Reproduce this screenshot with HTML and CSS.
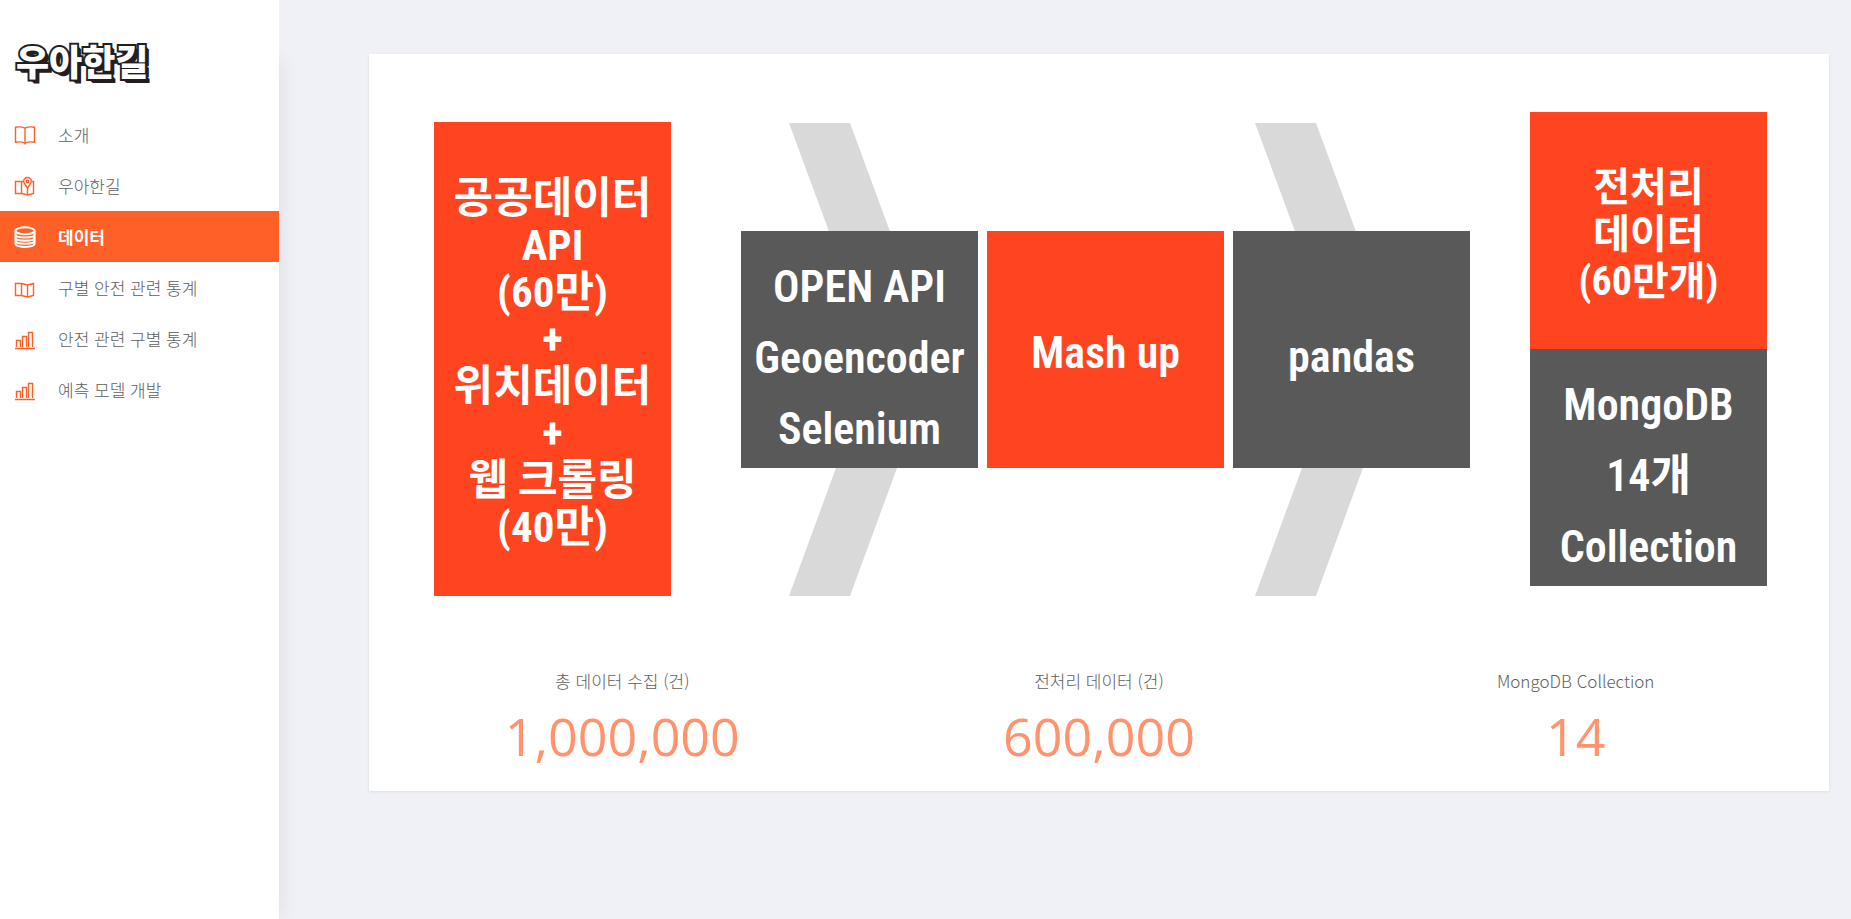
FILE: index.html
```html
<!DOCTYPE html>
<html lang="ko">
<head>
<meta charset="utf-8">
<meta name="viewport" content="width=device-width, initial-scale=1">
<title>우아한길</title>
<link rel="stylesheet" href="styles.css">
</head>
<body>
<div class="layout">
  <aside class="sidebar">
    <a class="logo" href="#">우아한길</a>
    <nav>
      <ul class="menu">
        <li><a class="menu-link" href="#">
          <svg class="icon" viewBox="0 0 22 22" aria-hidden="true"><path d="M11 4.2C8 2.7 4.500 2.700 1.500 3.200V18.200C4.500 17.700 8 17.700 11 19.200C14 17.700 17.500 17.700 20.500 18.200V3.200C17.500 2.700 14 2.700 11 4.200ZM11 4.200V20.500"/></svg>
          <span>소개</span></a></li>
        <li><a class="menu-link" href="#">
          <svg class="icon" viewBox="0 0 22 22" aria-hidden="true"><path d="M9.500 6.500H1.500V18.500H8L13.500 20L19.500 18.500V6.500H17.500M7.500 6.500V18.500M13.500 14V20M13.500 13.500C12.500 10.500 9.700 9.200 9.700 6.300A3.800 3.800 0 0 1 17.300 6.300C17.300 9.200 14.500 10.500 13.500 13.500Z"/><circle cx="13.500" cy="6.400" r="1.200"/></svg>
          <span>우아한길</span></a></li>
        <li><a class="menu-link active" href="#" aria-current="page">
          <svg class="icon database" viewBox="0 0 22 22" aria-hidden="true"><ellipse cx="11" cy="4.800" rx="9.600" ry="3.500"/><path d="M1.400 4.800V17.500C1.400 22 20.600 22 20.600 17.500V4.800M1.400 8.200C1.400 12.500 20.600 12.500 20.600 8.200M1.400 11.400C1.400 15.700 20.600 15.700 20.600 11.400M1.400 14.600C1.400 18.900 20.600 18.900 20.600 14.600"/></svg>
          <span>데이터</span></a></li>
        <li><a class="menu-link" href="#">
          <svg class="icon" viewBox="0 0 22 22" aria-hidden="true"><path d="M1.500 6.500H7.500L13.500 8L19.500 6.500V18.500L13.500 20L7.500 18.500H1.500ZM7.500 6.500V18.500M13.500 8V20"/></svg>
          <span>구별 안전 관련 통계</span></a></li>
        <li><a class="menu-link" href="#">
          <svg class="icon" viewBox="0 0 22 22" aria-hidden="true"><path d="M1 20.500H21M2.500 19V12.500H6.500V19M8.500 19V8.500H12.500V19M14.500 19V4.500H18.500V19"/></svg>
          <span>안전 관련 구별 통계</span></a></li>
        <li><a class="menu-link" href="#">
          <svg class="icon" viewBox="0 0 22 22" aria-hidden="true"><path d="M1 20.500H21M2.500 19V12.500H6.500V19M8.500 19V8.500H12.500V19M14.500 19V4.500H18.500V19"/></svg>
          <span>예측 모델 개발</span></a></li>
      </ul>
    </nav>
  </aside>
  <main class="main">
    <section class="card">
      <div class="diagram">
        <svg class="arrows" viewBox="0 0 1333 484" preserveAspectRatio="none" aria-hidden="true"><path d="M355 11H416L503 247L416 484H355L442 247ZM821 11H882L969 247L882 484H821L908 247Z"/></svg>
        <div class="block source">공공데이터<br>API<br>(60만)<br>+<br>위치데이터<br>+<br>웹 크롤링<br>(40만)</div>
        <div class="steps">
          <div class="block gray spaced">OPEN API<br>Geoencoder<br>Selenium</div>
          <div class="block latin">Mash up</div>
          <div class="block gray latin pandas">pandas</div>
        </div>
        <div class="results">
          <div class="block total">전처리<br>데이터<br>(60만개)</div>
          <div class="block gray spaced">MongoDB<br>14개<br>Collection</div>
        </div>
      </div>
      <dl class="stats">
        <div class="stat"><dt>총 데이터 수집 (건)</dt><dd>1,000,000</dd></div>
        <div class="stat"><dt>전처리 데이터 (건)</dt><dd>600,000</dd></div>
        <div class="stat"><dt>MongoDB Collection</dt><dd>14</dd></div>
      </dl>
    </section>
  </main>
</div>
</body>
</html>
```
FILE: styles.css
```css
* { box-sizing: border-box; }

body {
  margin: 0;
  background: #eff1f7;
  color: #606060;
  font-family: "Noto Sans CJK KR", sans-serif;
  font-size: 17px;
  font-weight: 300;
}

.layout {
  display: grid;
  grid-template-columns: 279px minmax(0, 1fr);
  min-height: 100vh;
}

.sidebar {
  position: relative;
  padding-top: 27px;
  background: #fff;
}

.sidebar::before {
  content: "";
  position: absolute;
  inset: 60px 0 0;
  z-index: -1;
  box-shadow: 1px 0 20px rgba(0, 0, 0, 0.08);
}

.logo {
  display: block;
  height: 82px;
  padding-left: 16px;
  color: #fff;
  font-size: 36px;
  font-weight: 900;
  line-height: 66px;
  text-decoration: none;
  -webkit-text-stroke: 4px #231f20;
  paint-order: stroke fill;
  text-shadow: 1px 1px 0 #231f20, 2px 2px 0 #231f20, 3px 3px 0 #231f20, 4px 4px 0 #231f20;
}

.menu {
  margin: 0;
  padding: 0;
  list-style: none;
}

.menu-link {
  display: flex;
  align-items: center;
  gap: 22px;
  height: 51px;
  padding-left: 14px;
  color: #606060;
  text-decoration: none;
}

.menu-link.active {
  background: #ff6028;
  color: #fff;
  font-weight: 700;
}

.icon {
  width: 22px;
  height: 22px;
  fill: none;
  stroke: #ff6028;
  stroke-width: 1.4;
}

.icon.database {
  stroke: #fff;
  stroke-width: 2;
}

.main { padding: 54px 22px 54px 90px; }

.card {
  padding: 58px 0 13px;
  background: #fff;
  box-shadow: 0 1px 3px rgba(0, 0, 0, 0.08);
}

.diagram {
  position: relative;
  display: grid;
  grid-template-columns: 237fr 70fr 729fr 60fr 237fr;
  margin: 0 62px 0 65px;
}

.arrows {
  position: absolute;
  inset: 0;
  width: 100%;
  height: 100%;
  fill: #d9d9d9;
}

.block {
  position: relative;
  display: flex;
  flex-direction: column;
  justify-content: center;
  aspect-ratio: 1;
  padding-top: 8px;
  background: #ff4420;
  color: #fff;
  font-family: "Roboto Condensed", "Noto Sans CJK KR", sans-serif;
  font-size: 43px;
  font-weight: 700;
  line-height: 47px;
  text-align: center;
}

.block.gray { background: #595959; }

.block.total { font-size: 40px; }

.block.latin,
.block.spaced {
  font-size: 44px;
  font-weight: 600;
}

.block.spaced {
  padding-top: 18px;
  line-height: 71px;
}

.block.pandas { padding-top: 16px; }

.block.source {
  aspect-ratio: 1 / 2;
  margin-top: 10px;
}

.steps {
  display: grid;
  grid-column: 3;
  grid-template-columns: repeat(3, minmax(0, 1fr));
  align-items: center;
  gap: 9px;
  padding-bottom: 10px;
}

.results { grid-column: 5; }

.stats {
  display: grid;
  grid-template-columns: repeat(3, 1fr);
  margin: 0;
  padding: 72px 15px 0;
  text-align: center;
}

.stat dt { line-height: 26px; }

.stat dd {
  margin: 0;
  color: #ff936d;
  font-family: "Open Sans", sans-serif;
  font-size: 52px;
  font-weight: 400;
  line-height: 84px;
}
```
